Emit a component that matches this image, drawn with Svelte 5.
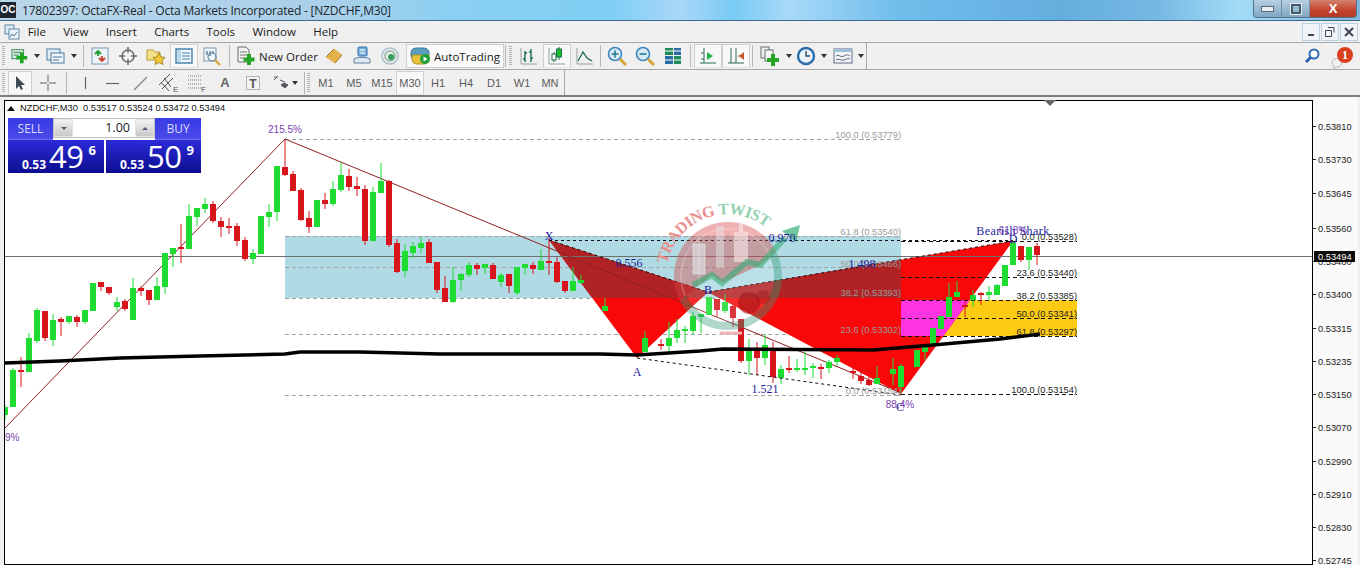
<script>
  const candles = [
    [5,405,407,415,420,'g'],[13,368,370,407,407,'g'],[21,357,370,372,387,'r'],[29,333,338,372,372,'g'],[37,308,310,341,343,'g'],[45,311,311,338,341,'r'],[53,314,320,340,346,'g'],[61,317,319,322,336,'r'],[69,316,316,322,324,'g'],[77,315,317,322,327,'r'],[85,310,310,322,324,'g'],[93,283,283,311,311,'g'],[101,282,282,287,291,'r'],[109,287,287,293,295,'r'],[117,297,302,307,311,'g'],[125,299,301,309,311,'r'],[133,278,288,320,320,'g'],[141,286,288,291,296,'r'],[149,290,290,300,305,'r'],[157,277,286,300,300,'g'],[165,253,253,287,294,'g'],[173,248,248,254,267,'g'],[181,224,247,249,263,'r'],[189,204,216,249,249,'g'],[197,208,208,217,226,'g'],[205,198,204,209,213,'g'],[213,201,204,221,223,'r'],[221,217,221,227,237,'r'],[229,218,226,228,234,'r'],[237,223,226,241,246,'r'],[245,237,240,259,261,'r'],[253,249,253,259,264,'g'],[261,216,216,254,254,'g'],[269,204,212,217,227,'g'],[277,166,166,212,221,'g'],[285,140,167,175,176,'r'],
    [293,171,174,191,191,'r'],[301,188,190,220,221,'r'],[309,211,218,227,233,'r'],[317,200,200,227,227,'g'],[325,193,200,204,209,'r'],[333,181,189,204,206,'g'],[341,163,175,190,192,'g'],[349,169,176,187,191,'r'],[357,177,186,189,196,'r'],[365,185,189,241,245,'r'],[373,187,192,241,241,'g'],[381,163,181,193,193,'g'],[389,180,181,245,247,'r'],[397,239,243,272,273,'r'],[405,244,251,271,277,'g'],[413,242,246,253,258,'g'],[421,237,243,248,253,'g'],[429,239,242,263,263,'r'],[437,262,262,290,293,'r'],[445,276,288,302,302,'r'],[453,267,280,302,303,'g'],[461,273,274,280,291,'g'],[469,262,265,275,277,'g'],[477,263,265,269,275,'r'],[485,264,264,268,274,'g'],[493,263,265,279,279,'r'],[501,273,275,282,287,'g'],[509,274,274,286,293,'r'],[517,267,267,293,295,'g'],[525,264,264,268,275,'g'],[533,262,265,269,274,'r'],[541,249,261,270,270,'g'],[549,238,261,263,275,'r'],[557,257,262,282,283,'r'],[565,281,281,291,293,'r'],[573,267,281,291,291,'g'],[581,275,280,283,284,'g'],
    [605,298,306,311,311,'g'],[645,331,338,352,352,'g'],[661,339,344,345,350,'r'],[669,322,338,346,355,'g'],[677,319,330,338,343,'g'],[685,326,329,331,343,'g'],[693,312,316,331,335,'g'],[701,314,314,317,333,'g'],[709,297,297,315,315,'g'],[717,299,299,310,317,'r'],[725,294,302,311,313,'g'],[733,300,306,318,327,'r'],[741,319,319,361,363,'r'],[749,339,351,361,375,'g'],[757,342,351,358,375,'r'],[765,334,345,358,365,'g'],[773,342,348,377,383,'r'],[781,365,369,378,384,'g'],[789,356,368,370,373,'r'],[797,359,368,369,372,'g'],[805,352,368,369,375,'g'],[813,363,366,367,378,'g'],[821,364,367,369,379,'r'],[829,360,362,368,373,'g'],[837,355,358,362,366,'g'],[853,367,371,373,379,'r'],[861,370,376,381,384,'r'],[869,376,380,385,386,'r'],[877,366,378,384,384,'g'],[893,358,369,374,385,'g'],[901,364,366,387,393,'g'],[917,350,350,367,367,'g'],[925,345,347,352,360,'g'],[933,328,328,345,345,'g'],[941,316,316,329,329,'g'],[949,283,297,317,317,'g'],[957,281,292,297,297,'g'],[965,300,305,306,317,'r'],[973,290,295,300,307,'g'],[981,292,293,295,305,'r'],[989,286,292,295,300,'g'],[997,284,285,295,295,'g'],[1005,265,265,286,286,'g'],[1013,243,243,265,265,'g'],[1021,246,246,260,262,'r'],[1029,247,247,260,270,'g'],[1037,243,246,255,265,'r']
  ];
  const fibLeft = [[139,'100.0 (0.53779)',134],[236,'61.8 (0.53540)',231],[267,'50.0 (0.53466)',263],[298,'38.2 (0.53393)',292],[334,'23.6 (0.53302)',329],[395,'0.0 (0.53154)',390]];
  const fibRight = [[241,'0.0 (0.53528)',236],[277,'23.6 (0.53440)',272],[300,'38.2 (0.53385)',295],[318,'50.0 (0.53341)',313],[336,'61.8 (0.53297)',331],[394,'100.0 (0.53154)',389]];
  const axis = [['0.53810',126],['0.53730',159],['0.53645',193],['0.53560',228],['0.53400',294],['0.53315',328],['0.53235',361],['0.53150',394],['0.53070',427],['0.52990',461],['0.52910',494],['0.52830',527],['0.52745',560]];
  const periods = ['M1','M5','M15','M30','H1','H4','D1','W1','MN'];
  const menus = ['File','View','Insert','Charts','Tools','Window','Help'];
  const ma = '5,363 60,361 120,358 200,356 285,354 300,352 360,352 440,354 600,354 637,355 700,351 723,349 873,350 933,345 1000,339 1040,334';
</script>

<div class="win">
  <header class="title">
    <span class="logo">OC</span>
    <span class="title-text">17802397: OctaFX-Real - Octa Markets Incorporated - [NZDCHF,M30]</span>
    <div class="winbtns">
      <span class="wb min"><i></i></span>
      <span class="wb max"><i></i></span>
      <span class="wb close">X</span>
    </div>
  </header>

  <nav class="menu">
    <svg class="menu-ico" width="16" height="16" viewBox="0 0 16 16"><rect x="1" y="1" width="9" height="9" fill="#dfeaf3" stroke="#5d8aa8"/><rect x="5" y="5" width="10" height="10" fill="#eef4f8" stroke="#5d8aa8"/><path d="M6 13l2-3 2 2 3-4" fill="none" stroke="#4a7a9a"/></svg>
    {#each menus as m}<span class="mi">{m}</span>{/each}
    <div class="mdi">
      <span class="mb"><svg width="16" height="16"><rect x="5" y="10" width="6" height="2" fill="#445"/></svg></span>
      <span class="mb"><svg width="16" height="16"><path d="M6 3.500h6v5M3.500 6.500h6v6h-6z" fill="none" stroke="#445"/></svg></span>
      <span class="mb"><svg width="16" height="16"><path d="M4 4l8 8M12 4l-8 8" stroke="#445" stroke-width="2"/></svg></span>
    </div>
  </nav>

  <div class="bar bar1">
    <span class="grip"></span>
    <span class="btn drop d1">
      <svg width="20" height="20" viewBox="0 0 20 20"><rect x="1" y="3" width="13" height="10" fill="#d8e8d8" stroke="#2e7d5b"/><path d="M3 6h9M3 9h6" stroke="#2e7d5b"/><path d="M12 6v12M6 12h12" stroke="#1fa81f" stroke-width="4"/></svg><i class="caret"></i>
    </span>
    <span class="btn drop d2">
      <svg width="20" height="20" viewBox="0 0 20 20"><rect x="1" y="3" width="13" height="11" fill="#e4eef6" stroke="#4a7aa0"/><rect x="5" y="7" width="13" height="10" fill="#eef4f9" stroke="#4a7aa0"/><path d="M7 11h9M7 14h6" stroke="#4a7aa0"/></svg><i class="caret"></i>
    </span>
    <span class="sep s83"></span>
    <span class="btn"><svg width="20" height="20" viewBox="0 0 20 20"><rect x="2" y="2" width="16" height="16" fill="#eef3f7" stroke="#7a9ab5"/><path d="M5 8l3-3 3 3M8 5v5" fill="none" stroke="#1c9a2c" stroke-width="1.800"/><path d="M9 12l3 3 3-3M12 15v-5" fill="none" stroke="#c8402a" stroke-width="1.800"/></svg></span>
    <span class="btn"><svg width="20" height="20" viewBox="0 0 20 20"><circle cx="10" cy="10" r="6" fill="none" stroke="#6b6b6b" stroke-width="1.500"/><path d="M10 1v6M10 13v6M1 10h6M13 10h6" stroke="#6b6b6b" stroke-width="1.500"/></svg></span>
    <span class="btn"><svg width="20" height="20" viewBox="0 0 20 20"><path d="M1 4h6l2 2h5v8H1z" fill="#f7e08a" stroke="#b59a3a"/><path d="M13 7l2 4 4 .5-3 3 1 4-4-2-4 2 1-4-3-3 4-.5z" fill="#f6c93a" stroke="#a68a1e"/></svg></span>
    <span class="btn on"><svg width="20" height="20" viewBox="0 0 20 20"><rect x="2" y="3" width="16" height="14" fill="#f4f8fc" stroke="#3f7cab" stroke-width="1.400"/><rect x="3" y="4" width="4" height="12" fill="#bcd6ea"/><path d="M8 7h8M8 10h8M8 13h8" stroke="#3f7cab"/></svg></span>
    <span class="btn"><svg width="20" height="20" viewBox="0 0 20 20"><rect x="2" y="2" width="12" height="13" fill="#f2f6fa" stroke="#7b97ad"/><path d="M5 9v-4M8 10v-5M11 8v-3" stroke="#5f86a5" stroke-width="1.600"/><circle cx="10" cy="11" r="4" fill="none" stroke="#6a8ba5" stroke-width="1.200"/><path d="M13 14l5 5" stroke="#d9a83a" stroke-width="2.400"/></svg></span>
    <span class="sep s229"></span>
    <span class="order">
      <svg width="20" height="20" viewBox="0 0 20 20"><path d="M2 1h8l3 3v12H2z" fill="#f2f2f2" stroke="#6b6b6b"/><path d="M4 6h7M4 9h7M4 12h4" stroke="#777"/><path d="M13 8v11M7.500 13.500h11" stroke="#25a525" stroke-width="4"/></svg>
      <span>New Order</span>
    </span>
    <span class="btn"><svg width="20" height="20" viewBox="0 0 20 20"><path d="M2 11l8-8 8 6-7 8z" fill="#e3b04a" stroke="#9a7420"/><path d="M2 11l9 6M10 3l8 6" stroke="#f6dd94"/></svg></span>
    <span class="btn"><svg width="20" height="20" viewBox="0 0 20 20"><rect x="6" y="1" width="9" height="9" rx="1" fill="#7fb2df" stroke="#2f6ca8"/><path d="M8 4h5M8 7h5" stroke="#fff"/><path d="M2 13c2-2 14-2 16 0v4H2z" fill="#dfe9f3" stroke="#5d7ea0"/></svg></span>
    <span class="btn"><svg width="20" height="20" viewBox="0 0 20 20"><circle cx="10" cy="10" r="8" fill="none" stroke="#a9bcc9" stroke-width="1.500"/><circle cx="10" cy="10" r="5" fill="none" stroke="#8fb09b" stroke-width="1.500"/><circle cx="11" cy="11" r="3" fill="#2f9e5a"/></svg></span>
    <span class="auto">
      <svg width="22" height="20" viewBox="0 0 22 20"><rect x="1" y="2" width="18" height="12" rx="5" fill="#5a9fc2" stroke="#3b7a9a"/><path d="M2 9h17v5a5 5 0 0 1-5 4H6a5 5 0 0 1-4-4z" fill="#e8c23c" stroke="#a88c20"/><circle cx="15" cy="13" r="5" fill="#1fa03a"/><path d="M13.500 10.500v5l4-2.500z" fill="#fff"/></svg>
      <span>AutoTrading</span>
    </span>
    <span class="sep s506"></span>
    <span class="grip g2"></span>
    <span class="btn"><svg width="20" height="20" viewBox="0 0 20 20"><path d="M2 2v16h16" fill="none" stroke="#95a09a"/><path d="M6 5v11M4 13h2M6 7h2M12 3v13M10 6h2M12 12h2" stroke="#1b6b4a" stroke-width="1.400"/></svg></span>
    <span class="btn on"><svg width="20" height="20" viewBox="0 0 20 20"><path d="M2 2v16h16" fill="none" stroke="#95a09a"/><path d="M7 6v10" stroke="#1b6b4a"/><rect x="5" y="8" width="4" height="6" fill="#fff" stroke="#1b6b4a"/><path d="M12 1v13" stroke="#1b6b4a"/><rect x="9.500" y="3" width="5" height="8" fill="#17c02e" stroke="#1b6b4a"/></svg></span>
    <span class="btn"><svg width="20" height="20" viewBox="0 0 20 20"><path d="M2 2v16h16" fill="none" stroke="#95a09a"/><path d="M3 15l5-9 4 6 5 3" fill="none" stroke="#1b6b4a" stroke-width="1.300"/></svg></span>
    <span class="sep s600"></span>
    <span class="btn"><svg width="20" height="20" viewBox="0 0 20 20"><circle cx="8" cy="8" r="6.500" fill="#d9e9f5" stroke="#3f86bf" stroke-width="1.600"/><path d="M8 4.500v7M4.500 8h7" stroke="#1d7c8a" stroke-width="1.600"/><path d="M13 13l6 6" stroke="#d5a63b" stroke-width="3"/></svg></span>
    <span class="btn"><svg width="20" height="20" viewBox="0 0 20 20"><circle cx="8" cy="8" r="6.500" fill="#d9e9f5" stroke="#3f86bf" stroke-width="1.600"/><path d="M4.500 8h7" stroke="#1d7c8a" stroke-width="1.600"/><path d="M13 13l6 6" stroke="#d5a63b" stroke-width="3"/></svg></span>
    <span class="btn"><svg width="20" height="20" viewBox="0 0 20 20"><rect x="2" y="2" width="8" height="7" fill="#1f8a5a"/><rect x="11" y="2" width="7" height="7" fill="#2a6ca5"/><rect x="2" y="10" width="8" height="8" fill="#2a6ca5"/><rect x="11" y="10" width="7" height="8" fill="#1f8a5a"/><path d="M2 5h16M2 14h16" stroke="#fff"/></svg></span>
    <span class="sep s690"></span>
    <span class="btn on"><svg width="20" height="20" viewBox="0 0 20 20"><path d="M2 17h16M6 2v15" fill="none" stroke="#2a6a55"/><path d="M3 7h3M3 13h3" stroke="#2a6a55"/><path d="M9 6l6 4-6 4z" fill="#22b14c"/></svg></span>
    <span class="btn on"><svg width="20" height="20" viewBox="0 0 20 20"><path d="M2 17h16M5 2v15M10 2v15" fill="none" stroke="#2a6a55"/><path d="M18 6l-5 4 5 4z" fill="#c0562a"/><path d="M12 10h3" stroke="#c0562a"/></svg></span>
    <span class="sep s752"></span>
    <span class="btn drop d3">
      <svg width="22" height="22" viewBox="0 0 22 22"><rect x="2" y="2" width="8" height="11" fill="#f0f0f0" stroke="#5f6f6f"/><rect x="6" y="5" width="8" height="11" fill="#f6f6f6" stroke="#5f6f6f"/><path d="M14 9v12M8 15h12" stroke="#25a525" stroke-width="4"/></svg><i class="caret"></i>
    </span>
    <span class="btn drop d3">
      <svg width="20" height="20" viewBox="0 0 20 20"><circle cx="10" cy="10" r="8" fill="#e9f2f9" stroke="#2a6ca5" stroke-width="2.400"/><path d="M10 5v5h4" fill="none" stroke="#3a4a5a" stroke-width="1.400"/></svg><i class="caret"></i>
    </span>
    <span class="btn drop d3">
      <svg width="20" height="18" viewBox="0 0 20 18"><rect x="1" y="2" width="18" height="14" fill="#f0f5f8" stroke="#668"/><rect x="1" y="2" width="18" height="3" fill="#9fc0d8"/><path d="M3 9c3-2 5 2 8 0s4-1 6 0M3 13c3-2 5 1 8 0s4-2 6-1" fill="none" stroke="#667"/></svg><i class="caret"></i>
    </span>
    <span class="bar-end"></span>
    <div class="bar-right">
      <svg width="18" height="18" viewBox="0 0 18 18"><circle cx="11" cy="7" r="4.500" fill="#fff" stroke="#2f6cb5" stroke-width="2"/><path d="M7.500 10.500L3 15" stroke="#2a5ea8" stroke-width="3"/></svg>
      <span class="notif"><svg width="14" height="13" viewBox="0 0 14 13"><path d="M1 6a5 4.500 0 0 1 10 0 5 4.500 0 0 1-6 4l-2 2v-3a5 4.500 0 0 1-2-3z" fill="#efefef" stroke="#bbb"/></svg><b>1</b></span>
    </div>
  </div>

  <div class="bar bar2">
    <span class="grip g3"></span>
    <span class="btn2 on c24"><svg width="14" height="16" viewBox="0 0 14 16"><path d="M3 1v13l3-3 2 4 2-1-2-4h4z" fill="#3e4a52"/></svg></span>
    <span class="btn2 c32"><svg width="18" height="18"><path d="M9 1v7M9 10v7M1 9h7M10 9h7" stroke="#666"/></svg></span>
    <span class="sep t66"></span>
    <span class="btn2 c28b"><svg width="18" height="18"><path d="M9.500 3v12" stroke="#666" stroke-width="1.200"/></svg></span>
    <span class="btn2 c28"><svg width="18" height="18"><path d="M2 9.500h13" stroke="#666" stroke-width="1.200"/></svg></span>
    <span class="btn2 c28"><svg width="18" height="18"><path d="M2 16L15 3" stroke="#8a8a8a" stroke-width="1.400"/></svg></span>
    <span class="btn2 c28"><svg width="22" height="20" viewBox="0 0 22 20"><path d="M1 12L12 1M4 16L15 5M6 5l7 9M3 9l8 9" stroke="#555" fill="none"/><text x="15" y="19" class="ic-t">E</text></svg></span>
    <span class="btn2 c28"><svg width="22" height="20" viewBox="0 0 22 20"><path d="M2 3h13M2 7h13M2 11h13M2 15h13" stroke="#777" stroke-dasharray="1 1"/><text x="15" y="19" class="ic-t">F</text></svg></span>
    <span class="btn2 c28 tA">A</span>
    <span class="btn2 c28"><svg width="16" height="16" viewBox="0 0 16 16"><rect x="1.500" y="1.500" width="13" height="13" fill="#f3f3f3" stroke="#777" stroke-dasharray="1 1"/><text x="8" y="13" class="ic-T">T</text></svg></span>
    <span class="btn2 drop2"><svg width="18" height="16" viewBox="0 0 18 16"><path d="M2 5l3-3M2 2h4M8 5l5 2M9 10l4 3 3-3-4-2z" stroke="#556" fill="#556"/></svg><i class="caret"></i></span>
    <span class="sep t304"></span>
    <span class="grip g4"></span>
    {#each periods as p}
      <span class="per" class:on={p === 'M30'}>{p}</span>
    {/each}
    <span class="bar-end"></span>
  </div>

  <div class="chart">
    <svg class="plot" width="1360" height="468" viewBox="0 97 1360 468">
      <defs>
        <clipPath id="blue"><rect x="285" y="236" width="616" height="62"/></clipPath>
        <clipPath id="gold"><rect x="901" y="300" width="176" height="36"/></clipPath>
        <clipPath id="area"><rect x="5" y="101" width="1307" height="463"/></clipPath>
        <clipPath id="upper"><path d="M660 200H790V240L760 265L722 283L712 275L680 300H660z"/></clipPath>
        <clipPath id="lower"><path d="M790 240V340H660V300L680 300L712 275L722 283L760 265z"/></clipPath>
      </defs>
      <rect x="0" y="97" width="1360" height="468" fill="#f0f0f0"/>
      <rect x="1313" y="97" width="45" height="468" fill="#fafafa"/>
      <rect x="4.500" y="100.500" width="1308" height="464" fill="#fff" stroke="#000"/>
      <path d="M1044 100h12l-6 6z" fill="#666"/>

      <g clip-path="url(#area)">
        <rect x="285" y="236" width="616" height="62" fill="#b0dbe4"/>
        <rect x="901" y="300" width="176" height="36" fill="#fdcb14"/>

        {#each fibLeft as f}
          <path d="M285 {f[0] + .5}H901" stroke="#a2a2a2" stroke-dasharray="4 3"/>
        {/each}

        <path d="M549 240L637 358L708 292z" fill="#f80808"/>
        <path d="M708 292L901 394L1013 241z" fill="#f80808"/>
        <g clip-path="url(#blue)">
          <path d="M549 240L637 358L708 292z" fill="#b02224"/>
          <path d="M708 292L901 394L1013 241z" fill="#b02224"/>
        </g>
        <g clip-path="url(#gold)">
          <path d="M708 292L901 394L1013 241z" fill="#ff33e0"/>
        </g>

        {#each fibRight as f}
          <path d="M901 {f[0] + .5}H1077" stroke="#111" stroke-dasharray="4 3"/>
        {/each}

        <path d="M5 256.500H1313" stroke="#707070"/>

        <polyline points="5,428 285,139 901,393" fill="none" stroke="#8e2020"/>

        {#each candles as c}
          <rect class={c[5]} x={c[0] - .5} y={c[1]} width="1" height={c[4] - c[1]}/>
          <rect class={c[5]} x={c[0] - 3} y={c[2]} width="6" height={Math.max(c[3] - c[2], 2)}/>
        {/each}

        <polyline points={ma} fill="none" stroke="#000" stroke-width="3.400"/>

        <g fill="none" stroke="#111" stroke-dasharray="3 3">
          <path d="M549 240.500H1013"/>
          <path d="M549 240L708 292L1013 241"/>
          <path d="M637 358L901 395"/>
        </g>

        {#each fibLeft as f}
          <text x="901" y={f[2] + 4} class="fib fibl">{f[1]}</text>
        {/each}
        {#each fibRight as f}
          <text x="1077" y={f[2] + 4} class="fib fibr">{f[1]}</text>
        {/each}

        <g>
          <g clip-path="url(#upper)">
            <circle cx="728" cy="276" r="54" fill="#d84444" fill-opacity=".42"/>
            <path d="M693 244h12v30h-12zM699 234v50" fill="#e8f4f6" fill-opacity=".5" stroke="#e8f4f6" stroke-opacity=".5"/>
            <path d="M716 226h8v42h-8z" fill="#e8f4f6" fill-opacity=".4"/>
            <path d="M734 232h14v30h-14zM739 222h4v10h-4z" fill="#f4e4e4" fill-opacity=".65"/>
            <circle cx="728" cy="276" r="47" fill="none" stroke="#fff" stroke-opacity=".2" stroke-width="2"/>
          </g>
          <g clip-path="url(#lower)">
            <circle cx="728" cy="276" r="50" fill="none" stroke="#3a9a78" stroke-opacity=".4" stroke-width="8"/>
            <circle cx="728" cy="276" r="46" fill="#fff" fill-opacity=".14"/>
          </g>
          <path d="M693 285L712 275L722 283L747 262L760 265L785 238" fill="none" stroke="#35ae74" stroke-opacity=".6" stroke-width="6"/>
          <path d="M782 231L800 225L796 242z" fill="#35ae74" fill-opacity=".7"/>
          <circle cx="749" cy="303" r="11" fill="#9a1414" fill-opacity=".55"/>
          <circle cx="763" cy="297" r="7" fill="#9a1414" fill-opacity=".4"/>
          <path id="wmarc" d="M667 264A62 62 0 0 1 764 226" fill="none"/>
          <text class="wmt"><textPath href="#wmarc" textLength="126" lengthAdjust="spacing"><tspan fill="#ea8f8f">TRADING</tspan> <tspan fill="#93d1b0">TWIST</tspan></textPath></text>
          <path d="M720 333h22" stroke="#eeb6b6" stroke-width="3"/>
        </g>

        <text x="549" y="240" class="lb">X</text>
        <text x="637" y="376" class="lb">A</text>
        <text x="708" y="294" class="lb">B</text>
        <text x="900" y="411" class="lb">C</text>
        <text x="1013" y="243" class="lb">D</text>
        <text x="629" y="267" class="lb">0.556</text>
        <text x="782" y="242" class="lb">0.970</text>
        <text x="862" y="268" class="lb">1.498</text>
        <text x="765" y="393" class="lb">1.521</text>
        <text x="1013" y="235" class="lb wide">Bearish Shark</text>
        <text x="285" y="133" class="pu">215.5%</text>
        <text x="5" y="441" class="pul">9%</text>
        <text x="900" y="408" class="pu">88.4%</text>
        <text x="1013" y="234" class="pu">61.8%</text>
      </g>

      {#each axis as a}
        <path d="M1313 {a[1] + .5}h3" stroke="#222"/>
        <text x="1318" y={a[1] + 3.5} class="ax">{a[0]}</text>
      {/each}
      <path d="M1313 261.500h3" stroke="#222"/>
      <text x="1318" y="265" class="ax">0.53480</text>
      <rect x="1314" y="251" width="41" height="11" fill="#0b0b0b"/>
      <text x="1318" y="260" class="ax axw">0.53494</text>
    </svg>

    <div class="overlay">
      <div class="sym"><svg class="tri" width="8" height="5" viewBox="0 0 8 5"><path d="M4 0l4 5H0z" fill="#111"/></svg>NZDCHF,M30&nbsp; 0.53517 0.53524 0.53472 0.53494</div>
      <div class="panel">
        <div class="sell">SELL</div>
        <div class="lots">
          <span class="spin"><i class="dn"></i></span>
          <span class="val">1.00</span>
          <span class="spin"><i class="up"></i></span>
        </div>
        <div class="buy">BUY</div>
        <div class="price p-sell"><small>0.53</small><b>49</b><sup>6</sup></div>
        <div class="price p-buy"><small>0.53</small><b>50</b><sup>9</sup></div>
      </div>
    </div>
  </div>
</div>

<style>
  :global(body) { margin: 0; background: #f0f0f0; }
  .win { width: 1360px; height: 565px; overflow: hidden; display: flex; flex-direction: column; font-family: "Open Sans", "Liberation Sans", sans-serif; color: #1a1a1a; }

  .title { height: 21px; box-sizing: border-box; flex: none; display: flex; align-items: center; border-bottom: 1px solid #3b6a8e;
    background: linear-gradient(90deg, #b9d5e8 0, #a9d0ea 25%, #8ad0f2 33%, #80cff5 45%, #a9d7f8 50%, #78cbf4 54%, #a8d9f8 58%, #70bdec 66%, #64aede 78%, #76b8e4 85%, #a2dcf6 91%, #7fb7dd 100%); }
  .logo { width: 16px; height: 16px; margin: 0 6px 0 0; background: #1d2630; color: #fff; font: bold 10px/16px "Liberation Sans", sans-serif; text-align: center; flex: none; }
  .title-text { font-size: 12px; letter-spacing: -.2px; white-space: nowrap; color: #20262c; }
  .winbtns { margin-left: auto; margin-right: 3px; display: flex; height: 18px; align-self: flex-start; border: 1px solid #54708a; border-top: 0; border-radius: 0 0 4px 4px; overflow: hidden; box-sizing: border-box; }
  .wb { display: flex; align-items: center; justify-content: center; height: 100%; }
  .min, .max { width: 27px; background: linear-gradient(#b7d0e2, #7fa6c2); border-right: 1px solid #6f8ea6; }
  .min i { width: 11px; height: 4px; background: #e8eef3; border: 1px solid #56687a; }
  .max i { width: 6px; height: 6px; border: 2px solid #48596a; outline: 1px solid #e6edf2; }
  .close { width: 46px; background: linear-gradient(#d2826f, #c4432d 60%, #b13a26); color: #fff; font: bold 13px "Liberation Sans", sans-serif; }

  .menu { height: 21px; flex: none; display: flex; align-items: center; border-bottom: 1px solid #a9a9a9; background: #f0f0f0; font-size: 11.500px; box-sizing: content-box; }
  .menu-ico { margin: 0 -1px 0 4px; flex: none; }
  .mi { padding: 0 8.700px; }
  .mdi { margin-left: auto; margin-right: 2px; display: flex; gap: 2px; }
  .mb { width: 16px; height: 16px; border: 1px solid #bcd0e0; background: #f0f4f8; display: block; box-sizing: content-box; margin-left: -1px; }

  .bar { flex: none; display: flex; align-items: center; background: #f0f0f0; position: relative; }
  .bar1 { height: 26px; border-bottom: 1px solid #a9a9a9; }
  .bar2 { height: 25px; border-bottom: 2px solid #7d7d7d; }
  .grip { width: 3px; height: 20px; margin: 0 1px 0 2px; flex: none; background: repeating-linear-gradient(#b4b4b4 0 1px, transparent 1px 2px); }
  .btn { width: 28px; height: 24px; flex: none; display: flex; align-items: center; justify-content: center; box-sizing: border-box; }
  .btn.on, .btn2.on, .per.on { background: #f8f8f8; border: 1px solid #cfcfcf; border-bottom-color: #e6e6e6; }
  .drop { justify-content: flex-start; gap: 5px; padding-left: 3px; }
  .d1 { width: 34px; padding-left: 5px; }
  .d2 { width: 34px; margin-left: 3px; padding-left: 3px; }
  .d3 { width: 37px; padding-left: 4px; }
  .caret { width: 0; height: 0; border: 3px solid transparent; border-top: 4px solid #333; border-bottom: 0; flex: none; }
  .sep { width: 1px; height: 22px; background: #b5b5b5; flex: none; }
  .s83 { margin: 0 2px 0 6px; }
  .s229 { margin: 0 6px 0 3px; }
  .s506 { margin-left: 1px; }
  .s600 { margin: 0 2px 0 1px; }
  .s690 { margin: 0 3px 0 3px; }
  .s752 { margin: 0 2px 0 2px; }
  .order { width: 84px; flex: none; display: flex; align-items: center; gap: 3px; font-size: 11.500px; white-space: nowrap; }
  .auto { width: 98px; height: 24px; margin-left: 2px; flex: none; box-sizing: border-box; display: flex; align-items: center; gap: 2px; padding-left: 3px; background: #fafafa; border: 1px solid #cfcfcf; font-size: 11.500px; white-space: nowrap; }
  .g2 { margin: 0 3px 0 3px; }
  .bar-end { width: 1px; height: 100%; background: #a9a9a9; flex: none; }
  .bar-right { position: absolute; left: 1303px; top: 4px; display: flex; align-items: center; gap: 10px; }
  .notif { position: relative; display: block; width: 26px; height: 18px; padding-top: 6px; box-sizing: border-box; }
  .notif b { position: absolute; left: 6px; top: 0; width: 16px; height: 16px; border-radius: 50%; background: #d9401f; color: #fff; font: bold 12px/16px "Liberation Serif", serif; text-align: center; }

  .btn2 { height: 24px; flex: none; display: flex; align-items: center; justify-content: center; box-sizing: border-box; }
  .g3 { margin-right: 3px; }
  .c24 { width: 24px; }
  .c32 { width: 32px; }
  .t66 { margin: 0 3px 0 2px; }
  .c28b { width: 29px; }
  .c28 { width: 28px; }
  .tA { color: #666; font: bold 13px "Liberation Sans", sans-serif; }
  .drop2 { width: 37px; gap: 2px; justify-content: flex-start; padding-left: 5px; }
  .t304 { margin: 0 2px 0 0; }
  .g4 { margin: 0 2px 0 0; }
  .per { width: 28px; height: 24px; flex: none; box-sizing: border-box; display: flex; align-items: center; justify-content: center; font: 11px "Liberation Sans", sans-serif; color: #5b5b5b; }
  .ic-t { font: 8px "Liberation Sans", sans-serif; fill: #555; }
  .ic-T { font: bold 12px "Liberation Sans", sans-serif; fill: #555; text-anchor: middle; }

  .chart { position: relative; flex: 1; min-height: 0; }
  .plot { display: block; }
  .g { fill: #1edc32; }
  .r { fill: #d8141c; }
  .fib { font: 9.300px "Liberation Sans", sans-serif; text-anchor: end; }
  .fibl { fill: #9a9a9a; }
  .fibr { fill: #222; }
  .lb { font: 12px "Liberation Serif", serif; fill: #1c1c9c; text-anchor: middle; }
  .wide { letter-spacing: .45px; }
  .pu { font: 10px "Liberation Sans", sans-serif; fill: #7a3fb0; text-anchor: middle; }
  .pul { font: 10px "Liberation Sans", sans-serif; fill: #7a3fb0; }
  .ax { font: 9.300px "Liberation Sans", sans-serif; fill: #222; }
  .axw { fill: #fff; }
  .wmt { font: bold 16px "Liberation Serif", serif; }

  .overlay { position: absolute; left: 7px; top: 6px; width: 400px; }
  .sym { font: 9.300px/11px "Liberation Sans", sans-serif; color: #111; height: 11px; margin-bottom: 4px; display: flex; align-items: center; white-space: pre; }
  .tri { margin: 0 5px 0 0; flex: none; }
  .panel { display: grid; grid-template-columns: 45px 51px 2px 49px 46px; grid-template-rows: 22px 33px; width: 193px; margin-left: 1px; }
  .sell, .buy { background: linear-gradient(#3a3ae6, #4a4aea); color: #d8dcff; font: 12px/22px "Open Sans", sans-serif; text-align: center; border-bottom: 1px solid #6a6af0; box-sizing: border-box; }
  .sell { grid-column: 1; grid-row: 1; }
  .buy { grid-column: 5; grid-row: 1; }
  .lots { grid-column: 2 / span 3; grid-row: 1; display: flex; height: 20px; background: #fff; border: 1px solid #bdbdbd; box-sizing: border-box; align-items: stretch; }
  .spin { width: 19px; background: linear-gradient(#f2f2f2, #c8c8c8); border: 1px solid #e4e4e4; box-sizing: border-box; display: flex; align-items: center; justify-content: center; flex: none; }
  .dn { border: 3px solid transparent; border-top: 3px solid #557; border-bottom: 0; }
  .up { border: 3px solid transparent; border-bottom: 3px solid #557; border-top: 0; }
  .val { flex: 1; text-align: right; padding-right: 5px; font: 12.500px/18px "Open Sans", sans-serif; }
  .price { grid-row: 2; background: linear-gradient(#2b2bd8, #0d0d90); color: #fff; display: flex; align-items: flex-start; position: relative; height: 33px; }
  .p-sell { grid-column: 1 / span 2; padding-left: 14px; }
  .p-buy { grid-column: 4 / span 2; padding-left: 14px; }
  .price small { font: bold 12px "Open Sans", sans-serif; margin-top: 16px; margin-right: 3px; }
  .price b { font: 400 31px/33px "Open Sans", sans-serif; letter-spacing: -.5px; }
  .price sup { font: bold 13px "Open Sans", sans-serif; margin: 1px 0 0 5px; }
</style>
